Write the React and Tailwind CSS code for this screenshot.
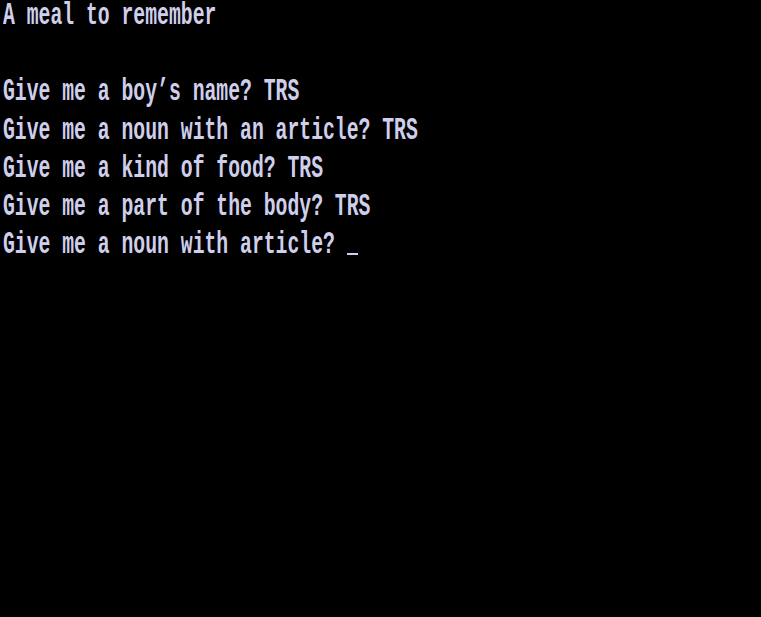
export default function App() {
  const lines = [
    "A meal to remember",
    "\u00a0",
    "Give me a boy\u2019s name? TRS",
    "Give me a noun with an article? TRS",
    "Give me a kind of food? TRS",
    "Give me a part of the body? TRS",
  ];
  return (
    <div className="w-[761px] h-[617px] bg-black overflow-hidden">
      <div className="pl-[3px] text-[#cfcfec] text-[19.76px] leading-[32.2px] font-['Liberation_Mono',monospace] font-bold whitespace-pre">
        {lines.map((l, i) => (
          <div key={i} className="h-[38.2px]">
            <span className="inline-block leading-[18px] scale-y-[1.6]">{l}</span>
          </div>
        ))}
        <div className="h-[38.2px]">
          <span className="inline-block leading-[18px] scale-y-[1.6]">Give me a noun with article? </span>
          <span className="inline-block w-[11px] h-[2px] bg-[#cfcfec] align-middle translate-y-[9px]"></span>
        </div>
      </div>
    </div>
  );
}
